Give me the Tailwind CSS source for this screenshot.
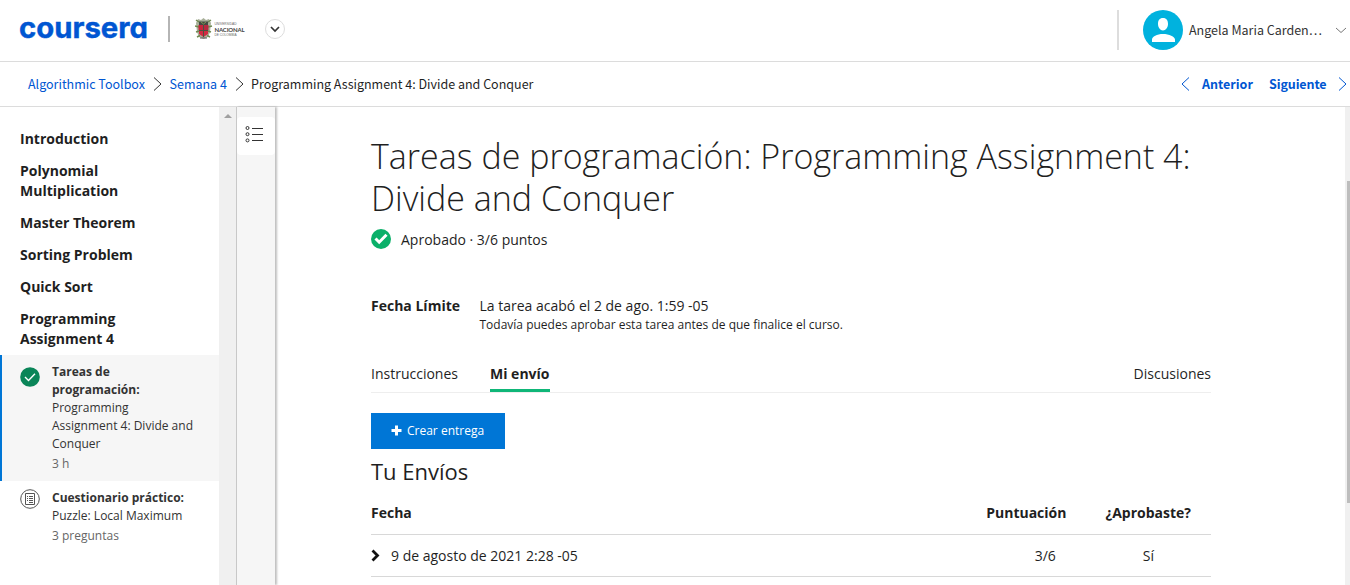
<!DOCTYPE html>
<html lang="es">
<head>
<meta charset="utf-8">
<title>Coursera</title>
<script src="https://cdn.jsdelivr.net/npm/@tailwindcss/browser@4"></script>
</head>
<body class="h-[585px] w-[1350px] overflow-hidden bg-white font-['Open_Sans',sans-serif] text-sm text-[#1f1f1f] flex flex-col">
  <header class="flex h-[62px] shrink-0 items-start border-b border-[#dcdcdc] pl-5 font-['Noto_Sans_CJK_SC',sans-serif]">
    <svg class="mt-3.5 h-7 w-[128px] shrink-0 overflow-visible" viewBox="0 0 128 28"><text x="-1" y="23.800" textLength="129" lengthAdjust="spacingAndGlyphs" fill="#0056d2" stroke="#0056d2" stroke-width=".4" class="font-['Inter',sans-serif] text-[29px] font-bold [font-feature-settings:'cv11']">coursera</text></svg>
    <span class="mt-4 ml-5 h-[26px] w-0.5 bg-[#b5b5b5]"></span>
    <svg class="mt-[17px] ml-[25px] h-[23px] w-[52px] shrink-0" viewBox="0 0 52 23">
      <path d="M3 2 6 3 8.500 1 11 3 14 2 16 6 15 15 13 20 8.500 22 4 20 2 15 1 6Z" fill="#a9b09a"/>
      <path d="M1 3l3 2M16 3l-3 2M0 9l4 1M17 9l-4 1M1 15l3-1M16 15l-3-1M2 20l3-1.500M15 20l-3-1.500" stroke="#6f8a50" stroke-width="1.500"/>
      <path d="M4 4.500h9V8H4z" fill="#454b43"/><path d="M6 5l2.500 2L11 5" stroke="#7d9a52" fill="none"/>
      <path d="M3.500 8h4.500v5H3.500z" fill="#c8263c"/><path d="M9 8h4.500v5H9z" fill="#b82a40"/>
      <path d="M4 13.500h9v3.500l-4.500 3-4.500-3z" fill="#d02b40"/><path d="M8.500 8v12M4 13.500h9" stroke="#4b5240"/>
      <path d="M5 21h7" stroke="#555"/>
      <text x="19.500" y="8.300" textLength="22" lengthAdjust="spacingAndGlyphs" fill="#666" class="font-['Liberation_Sans',sans-serif] text-[3.500px]">UNIVERSIDAD</text>
      <text x="19.500" y="15" textLength="30" lengthAdjust="spacing" fill="#444" class="font-['Lato',sans-serif] text-[6px] font-bold">NACIONAL</text>
      <text x="19.500" y="18.700" textLength="22" lengthAdjust="spacingAndGlyphs" fill="#666" class="font-['Liberation_Sans',sans-serif] text-[3.200px]">DE COLOMBIA</text>
    </svg>
    <span class="mt-[19px] ml-[18px] flex size-5 items-center justify-center rounded-full border border-[#ddd]">
      <svg class="size-2.5" viewBox="0 0 10 10"><path d="m1 3 4 4 4-4" fill="none" stroke="#333" stroke-width="1.700"/></svg>
    </span>
    <div class="ml-auto flex items-center pt-2.5">
      <span class="h-10 w-0.5 bg-[#ddd]"></span>
      <svg class="ml-6 size-10" viewBox="0 0 40 40"><circle cx="20" cy="20" r="20" fill="#00b2de"/><path d="M20 8c3.600 0 5 2.500 5 6 0 3.300-2.200 6.500-5 6.500s-5-3.200-5-6.500c0-3.500 1.400-6 5-6zM9 32v-2.500c0-3 5-5.500 11-5.500s12 2.500 12 5.500V32z" fill="#fff"/></svg>
      <span class="ml-1.5 w-[146px] whitespace-nowrap text-[12.5px] text-[#333]">Angela Maria Carden…</span>
      <svg class="mr-[3px] h-2 w-3" viewBox="0 0 12 8"><path d="m1 2 5 4.500L11 2" fill="none" stroke="#777" stroke-width="1"/></svg>
    </div>
  </header>
  <nav class="flex h-[45px] shrink-0 items-center border-b border-[#dcdcdc] pl-7 font-['Noto_Sans_CJK_SC',sans-serif] text-[12.5px] whitespace-nowrap text-[#0056d2]">
    <span class="w-[124px]">Algorithmic Toolbox</span>
    <svg class="h-4 w-3" viewBox="0 0 12 16"><path d="m2 1.500 7 6.500-7 6.500" fill="none" stroke="#333"/></svg>
    <span class="ml-[5.500px] w-[64.500px]">Semana 4</span>
    <svg class="h-4 w-3" viewBox="0 0 12 16"><path d="m2 1.500 7 6.500-7 6.500" fill="none" stroke="#333"/></svg>
    <span class="ml-[5px] text-[#1f1f1f]">Programming Assignment 4: Divide and Conquer</span>
    <svg class="ml-auto h-4 w-3" viewBox="0 0 12 16"><path d="M9 1.500 2 8l7 6.500" fill="none" stroke="#0056d2"/></svg>
    <span class="ml-[10px] w-[67px] font-bold">Anterior</span>
    <span class="w-[67px] font-bold tracking-[-.1px]">Siguiente</span>
    <svg class="mr-0.5 h-4 w-3" viewBox="0 0 12 16"><path d="m3 1.500 7 6.500-7 6.500" fill="none" stroke="#0056d2"/></svg>
  </nav>
  <div class="flex min-h-0 flex-1">
    <aside class="w-[219px] shrink-0 overflow-hidden pt-[22px]">
      <div class="flex flex-col gap-3 pl-5 leading-5 font-bold">
        <p>Introduction</p><p>Polynomial<br>Multiplication</p><p>Master Theorem</p><p>Sorting Problem</p><p>Quick Sort</p><p>Programming<br>Assignment 4</p>
      </div>
      <div class="mt-[6px] flex h-[126px] border-l-2 border-[#0076d6] bg-[#f6f6f6] pt-2 pl-[18px] text-xs leading-[18px] text-[#333]">
        <svg class="mt-1 size-5 shrink-0" viewBox="0 0 20 20"><circle cx="10" cy="10" r="9.800" fill="#0a8558"/><path d="m5 10 3.500 3.500L15 6.700" fill="none" stroke="#fff" stroke-width="1.400"/></svg>
        <div class="ml-3"><p class="font-bold">Tareas de<br>programación:</p><p>Programming<br>Assignment 4: Divide and<br>Conquer</p><p class="mt-0.5 text-[#666]">3 h</p></div>
      </div>
      <div class="flex pt-2 pl-5 text-xs leading-[18px] text-[#333]">
        <svg class="size-5 shrink-0" viewBox="0 0 20 20" fill="none" stroke="#555"><circle cx="10" cy="10" r="9.300"/><path d="M5.500 4.500h9v11h-9zM7 7.500h1M9 7.500h4M7 9.500h1M9 9.500h4M7 11.500h1M9 11.500h4M9 13.500h4"/></svg>
        <div class="ml-3"><p class="font-bold">Cuestionario práctico:</p><p>Puzzle: Local Maximum</p><p class="mt-0.5 text-[#666]">3 preguntas</p></div>
      </div>
    </aside>
    <div class="flex w-[17px] shrink-0 justify-center bg-[#f0f0f0] pt-[7px]"><svg class="h-1 w-2" viewBox="0 0 8 4"><path d="M0 4 4 0l4 4z" fill="#a0a0a0"/></svg></div>
    <div class="z-10 w-[39px] shrink-0 border-l border-[#c8c8c8] bg-[#f6f6f6] pt-[10px] shadow-[2px_0_2px_rgba(0,0,0,.25)]">
      <div class="flex h-[38px] justify-center rounded-sm bg-white pt-2"><svg class="mr-[5px] h-[18px] w-[18px]" viewBox="0 0 18 18" fill="none" stroke="#333"><circle cx="2.500" cy="3" r="1.500"/><circle cx="2.500" cy="9.200" r="1.500"/><circle cx="2.500" cy="15.400" r="1.500"/><path d="M7 3.500h11M7 9.500h11M7 15.500h11"/></svg></div>
    </div>
    <main class="ml-24 w-[840px] shrink-0 pt-7">
      <h1 class="text-[34px] leading-[42px] font-light whitespace-nowrap">Tareas de programación: Programming Assignment 4:<br>Divide and Conquer</h1>
      <div class="mt-[10px] flex h-5 items-center"><svg class="size-5" viewBox="0 0 20 20"><circle cx="10" cy="10" r="10" fill="#0ab069"/><path d="m4.500 9.500 3.700 3.700 7.300-7.500" fill="none" stroke="#fff" stroke-width="3"/></svg><span class="ml-2.5 pt-0.5">Aprobado · 3/6 puntos</span></div>
      <div class="mt-[47px] flex leading-5"><b class="w-[108.500px] font-bold">Fecha Límite</b><div><p>La tarea acabó el 2 de ago. 1:59 -05</p><p class="text-xs leading-[18px]">Todavía puedes aprobar esta tarea antes de que finalice el curso.</p></div></div>
      <div class="mt-[26px] flex h-[33px] border-b border-[#eee] pt-1 leading-5"><span class="w-[119px]">Instrucciones</span><span class="h-[28px] border-b-[3px] border-[#0fb678] font-bold">Mi envío</span><span class="ml-auto">Discusiones</span></div>
      <div class="mt-5 flex h-9 w-[134px] items-center bg-[#0076d6] pl-5 text-xs text-white"><svg class="mr-[5px] mb-0.5 size-[11px]" viewBox="0 0 11 11"><path d="M5.500.500v10M.500 5.500h10" stroke="#fff" stroke-width="3"/></svg>Crear entrega</div>
      <h2 class="mt-[6px] text-[22px] leading-8">Tu Envíos</h2>
      <div class="flex h-12 items-center border-b border-[#d8d8d8] pt-[5px] font-bold"><span class="flex-1">Fecha</span><span class="mr-[39px]">Puntuación</span><span class="mr-5">¿Aprobaste?</span></div>
      <div class="flex h-[42px] items-center border-b border-[#d8d8d8]"><svg class="mr-2.5 h-3.5 w-2.5" viewBox="0 0 10 14"><path d="m1.500 1.500 5 5-5 5" fill="none" stroke="#111" stroke-width="2.800"/></svg><span class="flex-1">9 de agosto de 2021 2:28 -05</span><span class="mr-[87px]">3/6</span><span class="mr-[57px]">Sí</span></div>
    </main>
    <div class="ml-auto w-[5px] bg-[#f0f0f0] pt-[74px] pl-0.5"><div class="h-[322px] bg-[#bdbdbd]"></div></div>
  </div>
</body>
</html>
